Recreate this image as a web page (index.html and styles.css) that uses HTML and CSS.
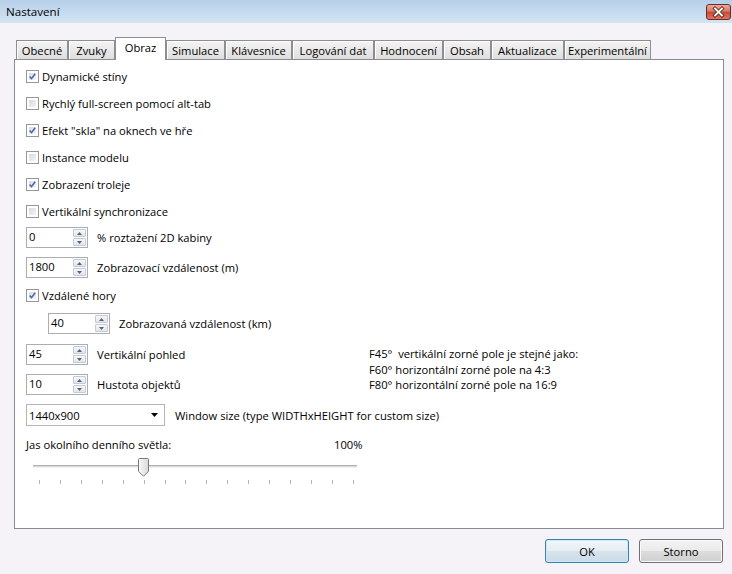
FILE: index.html
```html
<!DOCTYPE html>
<html lang="cs">
<head>
<meta charset="utf-8">
<title>Nastavení</title>
<link rel="stylesheet" href="styles.css">
</head>
<body>
<div class="window">
  <div class="titlebar">
    <span class="title">Nastavení</span>
    <span class="close">
      <svg width="25" height="16" viewBox="0 0 25 16">
        <defs>
          <linearGradient id="closeGrad" x1="0" y1="0" x2="0" y2="1">
            <stop offset="0" stop-color="#eab0a3"/>
            <stop offset="0.45" stop-color="#d67866"/>
            <stop offset="0.5" stop-color="#c44a35"/>
            <stop offset="1" stop-color="#dc7a62"/>
          </linearGradient>
        </defs>
        <rect x="0.5" y="0.5" width="24" height="15" rx="2.5" fill="url(#closeGrad)" stroke="#6f2b22"/>
        <path d="M9 4.5 L16 11.5 M16 4.5 L9 11.5" stroke="#5b2b24" stroke-width="3.6" stroke-linecap="square"/>
        <path d="M9 4.5 L16 11.5 M16 4.5 L9 11.5" stroke="#ffffff" stroke-width="1.8" stroke-linecap="square"/>
      </svg>
    </span>
  </div>

  <div class="tabctl">
    <div class="tabstrip">
      <span class="tab tab-obecne">Obecné</span>
      <span class="tab tab-zvuky">Zvuky</span>
      <span class="tab tab-obraz active">Obraz</span>
      <span class="tab tab-simulace">Simulace</span>
      <span class="tab tab-klavesnice">Klávesnice</span>
      <span class="tab tab-logovani">Logování dat</span>
      <span class="tab tab-hodnoceni">Hodnocení</span>
      <span class="tab tab-obsah">Obsah</span>
      <span class="tab tab-aktualizace">Aktualizace</span>
      <span class="tab tab-experimentalni">Experimentální</span>
    </div>

    <div class="panel">
      <div class="chk-row"><span class="chk"><svg class="mark" viewBox="0 0 11 11"><path d="M2 5.6 L4.3 8.2 L8.8 2.2"/></svg></span><span>Dynamické stíny</span></div>
      <div class="chk-row"><span class="chk"></span><span>Rychlý full-screen pomocí alt-tab</span></div>
      <div class="chk-row"><span class="chk"><svg class="mark" viewBox="0 0 11 11"><path d="M2 5.6 L4.3 8.2 L8.8 2.2"/></svg></span><span>Efekt "skla" na oknech ve hře</span></div>
      <div class="chk-row"><span class="chk"></span><span>Instance modelu</span></div>
      <div class="chk-row"><span class="chk"><svg class="mark" viewBox="0 0 11 11"><path d="M2 5.6 L4.3 8.2 L8.8 2.2"/></svg></span><span>Zobrazení troleje</span></div>
      <div class="chk-row"><span class="chk"></span><span>Vertikální synchronizace</span></div>

      <div class="spin-row first">
        <div class="spin"><span class="val">0</span><span class="btns"><span class="sbtn"><svg viewBox="0 0 5 3"><polygon points="2.5,0 5,3 0,3"/></svg></span><span class="sbtn"><svg viewBox="0 0 5 3"><polygon points="0,0 5,0 2.5,3"/></svg></span></span></div>
        <span class="lbl">% roztažení 2D kabiny</span>
      </div>
      <div class="spin-row">
        <div class="spin"><span class="val">1800</span><span class="btns"><span class="sbtn"><svg viewBox="0 0 5 3"><polygon points="2.5,0 5,3 0,3"/></svg></span><span class="sbtn"><svg viewBox="0 0 5 3"><polygon points="0,0 5,0 2.5,3"/></svg></span></span></div>
        <span class="lbl">Zobrazovací vzdálenost (m)</span>
      </div>

      <div class="chk-row mid"><span class="chk"><svg class="mark" viewBox="0 0 11 11"><path d="M2 5.6 L4.3 8.2 L8.8 2.2"/></svg></span><span>Vzdálené hory</span></div>

      <div class="spin-row sub">
        <div class="spin"><span class="val">40</span><span class="btns"><span class="sbtn"><svg viewBox="0 0 5 3"><polygon points="2.5,0 5,3 0,3"/></svg></span><span class="sbtn"><svg viewBox="0 0 5 3"><polygon points="0,0 5,0 2.5,3"/></svg></span></span></div>
        <span class="lbl">Zobrazovaná vzdálenost (km)</span>
      </div>

      <div class="fov">
        <div class="fov-left">
          <div class="spin-row top">
            <div class="spin"><span class="val">45</span><span class="btns"><span class="sbtn"><svg viewBox="0 0 5 3"><polygon points="2.5,0 5,3 0,3"/></svg></span><span class="sbtn"><svg viewBox="0 0 5 3"><polygon points="0,0 5,0 2.5,3"/></svg></span></span></div>
            <span class="lbl">Vertikální pohled</span>
          </div>
          <div class="spin-row">
            <div class="spin"><span class="val">10</span><span class="btns"><span class="sbtn"><svg viewBox="0 0 5 3"><polygon points="2.5,0 5,3 0,3"/></svg></span><span class="sbtn"><svg viewBox="0 0 5 3"><polygon points="0,0 5,0 2.5,3"/></svg></span></span></div>
            <span class="lbl">Hustota objektů</span>
          </div>
        </div>
        <div class="fov-info">
          <div>F45°&nbsp; vertikální zorné pole je stejné jako:</div>
          <div>F60° horizontální zorné pole na 4:3</div>
          <div>F80° horizontální zorné pole na 16:9</div>
        </div>
      </div>

      <div class="combo-row">
        <div class="combo"><span class="val">1440x900</span><svg class="drop" width="7" height="4" viewBox="0 0 7 4"><polygon points="0,0 7,0 3.5,4"/></svg></div>
        <span class="lbl">Window size (type WIDTHxHEIGHT for custom size)</span>
      </div>

      <div class="jas-row">
        <span class="jas-label">Jas okolního denního světla:</span>
        <span>100%</span>
      </div>

      <div class="slider">
        <div class="track"></div>
        <svg class="thumb" width="11" height="19" viewBox="0 0 11 19">
          <defs>
            <linearGradient id="thumbGrad" x1="0" y1="0" x2="1" y2="0">
              <stop offset="0" stop-color="#fbfbfb"/>
              <stop offset="1" stop-color="#d8d8d8"/>
            </linearGradient>
          </defs>
          <path d="M1.5 0.5 H9.5 Q10.5 0.5 10.5 1.5 V13.3 L5.5 18.3 L0.5 13.3 V1.5 Q0.5 0.5 1.5 0.5 Z" fill="url(#thumbGrad)" stroke="#7a7a7a"/>
        </svg>
      </div>
      <div class="ticks">
        <i></i><i></i><i></i><i></i><i></i><i></i><i></i><i></i>
        <i></i><i></i><i></i><i></i><i></i><i></i><i></i><i></i>
      </div>
    </div>
  </div>

  <div class="footer">
    <button class="btn default">OK</button>
    <button class="btn">Storno</button>
  </div>
</div>
</body>
</html>
```

FILE: styles.css
```css
* {
  box-sizing: border-box;
}

html,
body {
  margin: 0;
  padding: 0;
}

body {
  width: 732px;
  height: 574px;
  overflow: hidden;
  background: #f5f3f7;
  font-family: "Open Sans", "Noto Sans", sans-serif;
  font-size: 11.2px;
  color: #000;
}

.window {
  display: flex;
  flex-direction: column;
  height: 574px;
}

/* Title bar */
.titlebar {
  height: 23px;
  flex: none;
  display: flex;
  align-items: center;
  justify-content: space-between;
  padding-left: 6px;
  background: linear-gradient(#b6cfe9, #c7dbef 55%, #d5e4f3);
  font-size: 11.6px;
}

.close {
  display: flex;
  width: 25px;
  height: 16px;
  margin-right: 1px;
  margin-top: 1px;
}

/* Tab control */
.tabctl {
  margin-top: 14px;
  margin-left: 14px;
  width: 710px;
}

.tabstrip {
  display: flex;
  align-items: flex-end;
  height: 22px;
  padding-left: 2px;
}

.tab {
  position: relative;
  height: 19px;
  padding-top: 1px;
  display: flex;
  align-items: center;
  justify-content: center;
  border: 1px solid #8c8e94;
  border-bottom: none;
  background: linear-gradient(#f4f4f4, #e9e9e9 50%, #dedede 100%);
  box-shadow: inset 1px 1px 0 #fdfdfd;
  white-space: nowrap;
}

.tab.active {
  z-index: 1;
  height: 23px;
  margin-bottom: -1px;
  padding: 0 0 3px;
  background: #fff;
  box-shadow: none;
}

.tab-obecne { width: 52px; }
.tab-zvuky { width: 47px; }
.tab-obraz { width: 51px; }
.tab-simulace { width: 59px; }
.tab-klavesnice { width: 67px; }
.tab-logovani { width: 82px; }
.tab-hodnoceni { width: 69px; }
.tab-obsah { width: 48px; }
.tab-aktualizace { width: 73px; }
.tab-experimentalni { width: 87px; }

.panel {
  height: 470px;
  border: 1px solid #898c95;
  background: #fff;
  padding: 3px 0 0 11px;
}

/* Checkbox rows */
.chk-row {
  display: flex;
  align-items: center;
  height: 27px;
}

.chk-row.mid {
  margin-top: 4px;
}

.chk {
  flex: none;
  width: 13px;
  height: 13px;
  margin-right: 3px;
  border: 1px solid #979797;
  padding: 1px;
  background: linear-gradient(135deg, #d3d7dd, #f6f7f8) content-box, #fff;
  box-shadow: inset 0 0 0 2px #fff;
  display: flex;
}

.mark {
  width: 9px;
  height: 9px;
  margin: 0;
  overflow: visible;
}

.mark path {
  fill: none;
  stroke: #4862a0;
  stroke-width: 1.8;
}

/* Spin boxes */
.spin-row {
  display: flex;
  align-items: center;
  height: 21px;
  margin-top: 9px;
}

.spin-row.first {
  margin-top: 2px;
}

.spin-row.sub {
  margin-top: 4px;
  padding-left: 22px;
}

.spin-row.top {
  margin-top: 0;
}

.spin {
  flex: none;
  width: 62px;
  height: 21px;
  border: 1px solid #abadb3;
  background: #fff;
  display: flex;
  margin-right: 9px;
}

.spin .val {
  flex: 1;
  padding-left: 2px;
  line-height: 18px;
}

.btns {
  width: 14px;
  display: flex;
  flex-direction: column;
  gap: 1px;
  padding: 1px 1px 1px 0;
}

.sbtn {
  flex: 1;
  display: flex;
  align-items: center;
  justify-content: center;
  border: 1px solid #c4cbd6;
  border-radius: 1px;
  background: linear-gradient(#f6f7f8, #e2e5ea);
}

.sbtn svg {
  width: 5px;
  height: 3px;
  fill: #55627a;
}

.lbl {
  white-space: nowrap;
}

/* Field-of-view block */
.fov {
  display: flex;
  margin-top: 10px;
}

.fov-left {
  width: 343px;
  flex: none;
}

.fov-info {
  padding-top: 2px;
  line-height: 15.5px;
  white-space: nowrap;
}

/* Combo box */
.combo-row {
  display: flex;
  align-items: center;
  margin-top: 9px;
  height: 22px;
}

.combo {
  width: 139px;
  height: 22px;
  border: 1px solid #b5b5b5;
  background: #fff;
  display: flex;
  align-items: center;
  justify-content: space-between;
  padding: 0 6px 0 2px;
  margin-right: 10px;
}

.drop {
  fill: #000;
}

/* Brightness slider */
.jas-row {
  display: flex;
  margin-top: 11px;
  line-height: 15px;
}

.jas-label {
  width: 308px;
}

.slider {
  position: relative;
  width: 324px;
  height: 26px;
  margin-left: 7px;
}

.track {
  position: absolute;
  left: 0;
  right: 0;
  top: 13px;
  height: 3px;
  background: linear-gradient(#b1b1b1 0 1px, #d9d9d9 1px 2px, #f1f1f1 2px 3px);
}

.thumb {
  position: absolute;
  left: 105px;
  top: 6px;
}

.ticks {
  display: flex;
  justify-content: space-between;
  width: 315px;
  height: 4px;
  margin: 2px 0 0 13px;
}

.ticks i {
  width: 1px;
  height: 4px;
  background: #b4b4b4;
}

/* Footer buttons */
.footer {
  display: flex;
  justify-content: flex-end;
  gap: 10px;
  padding-right: 9px;
  margin-top: 10px;
}

.btn {
  width: 84px;
  height: 24px;
  border: 1px solid #707070;
  border-radius: 3px;
  background: linear-gradient(#f2f2f2 0%, #ebebeb 50%, #dddddd 50%, #cfcfcf 100%);
  box-shadow: inset 0 0 0 1px #fbfbfb;
  font-family: inherit;
  font-size: 11.2px;
  color: #000;
  padding: 0;
}

.btn.default {
  border-color: #3c7fb1;
  background: linear-gradient(#f1f6f9 0%, #e6eef4 50%, #d7e4ed 50%, #cbdbe6 100%);
  box-shadow: inset 0 0 0 1px #c8eafb;
}
```
